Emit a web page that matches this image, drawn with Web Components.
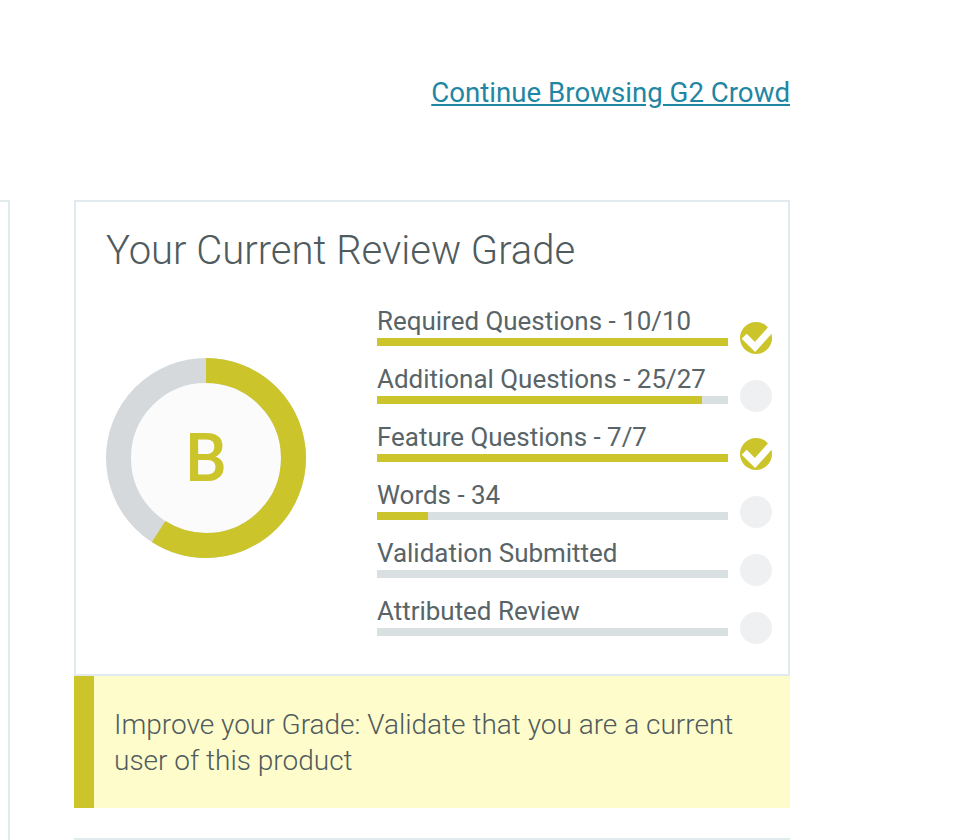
<!DOCTYPE html>
<html>
<head>
<meta charset="utf-8">
<title>Review Grade</title>
<style>
html, body { margin: 0; height: 840px; overflow: hidden; background: #fff; }
body { font-family: Roboto, "Liberation Sans", sans-serif; color: #4f5b5e; }
</style>
</head>
<body>
<review-page>
  <review-card title="Your Current Review Grade">
    <grade-donut slot="donut" grade="B" percent="59"></grade-donut>
    <grade-row value="100" done>Required Questions - 10/10</grade-row>
    <grade-row value="92.6">Additional Questions - 25/27</grade-row>
    <grade-row value="100" done>Feature Questions - 7/7</grade-row>
    <grade-row value="14.5">Words - 34</grade-row>
    <grade-row value="0">Validation Submitted</grade-row>
    <grade-row value="0">Attributed Review</grade-row>
    <improve-note slot="note">Improve your Grade: Validate that you are a current user of this product</improve-note>
  </review-card>
</review-page>

<script>
class ReviewPage extends HTMLElement {
  constructor() {
    super();
    this.attachShadow({ mode: "open" }).innerHTML = `<style>
      :host { display: block; height: 840px; overflow: hidden; }
      header { height: 200px; width: 790px; box-sizing: border-box; padding-top: 74px; text-align: right; font-size: 27.65px; line-height: 38px; }
      a { color: #1f86a3; text-decoration: underline; }
      .cols { display: grid; grid-template-columns: 10px 716px; column-gap: 64px; }
      aside { border-top: 2px solid #e1eaec; border-right: 2px solid #e1eaec; height: 640px; box-sizing: border-box; }
      .next { height: 2px; background: #e1eaec; margin-top: 30px; }
    </style>
    <header><a href="#">Continue Browsing G2 Crowd</a></header>
    <div class="cols">
      <aside></aside>
      <main><slot></slot><div class="next"></div></main>
    </div>`;
  }
}

class ReviewCard extends HTMLElement {
  constructor() {
    super();
    this.attachShadow({ mode: "open" }).innerHTML = `<style>
      :host { display: block; }
      .box { border: 2px solid #e1eaec; height: 476px; box-sizing: border-box; padding: 0 16px 0 30px; }
      h2 { margin: 0; height: 94px; padding-top: 25px; box-sizing: border-box; font-weight: 300; font-size: 40px; line-height: 48px; color: #4f5b5e; }
      .body { display: grid; grid-template-columns: 200px 395px; column-gap: 71px; }
      .left { padding-top: 62px; }
    </style>
    <div class="box">
      <h2></h2>
      <div class="body">
        <div class="left"><slot name="donut"></slot></div>
        <div><slot></slot></div>
      </div>
    </div>
    <slot name="note"></slot>`;
    this.shadowRoot.querySelector("h2").textContent = this.getAttribute("title");
  }
}

class GradeDonut extends HTMLElement {
  constructor() {
    super();
    const r = 87.5;
    const len = 2 * Math.PI * r;
    const on = len * Number(this.getAttribute("percent")) / 100;
    this.attachShadow({ mode: "open" }).innerHTML = `<style>
      :host { display: block; width: 200px; height: 200px; position: relative; }
      svg { display: block; }
      span { position: absolute; inset: 0; display: flex; align-items: center; justify-content: center; font-size: 66px; font-weight: 500; color: #cbc42a; }
    </style>
    <svg width="200" height="200" viewBox="0 0 200 200">
      <circle cx="100" cy="100" r="75" fill="#fbfbfb"/>
      <circle cx="100" cy="100" r="${r}" fill="none" stroke="#d5d9dc" stroke-width="25"/>
      <circle cx="100" cy="100" r="${r}" fill="none" stroke="#cbc42a" stroke-width="25"
        stroke-dasharray="${on} ${len}" transform="rotate(-90 100 100)"/>
    </svg>
    <span>${this.getAttribute("grade")}</span>`;
  }
}

class GradeRow extends HTMLElement {
  constructor() {
    super();
    const done = this.hasAttribute("done");
    const mark = done
      ? `<svg width="32" height="32" viewBox="0 0 32 32"><circle cx="16" cy="16" r="16" fill="#cbc42a"/><path d="M4.2 14.3L15 25 32 6" fill="none" stroke="#fff" stroke-width="7"/></svg>`
      : `<svg width="32" height="32" viewBox="0 0 32 32"><circle cx="16" cy="16" r="16" fill="#eef0f2"/></svg>`;
    this.attachShadow({ mode: "open" }).innerHTML = `<style>
      :host { display: grid; grid-template-columns: 351px 32px; column-gap: 12px; align-items: end; height: 58px; }
      .label { font-size: 25.95px; line-height: 34px; white-space: nowrap; color: #586467; }
      .col { padding-bottom: 8px; }
      .track { height: 8px; background: #d9e0e2; }
      .fill { height: 100%; background: #cbc42a; width: ${this.getAttribute("value")}%; }
      svg { display: block; }
    </style>
    <div class="col">
      <div class="label"><slot></slot></div>
      <div class="track"><div class="fill"></div></div>
    </div>
    ${mark}`;
  }
}

class ImproveNote extends HTMLElement {
  constructor() {
    super();
    this.attachShadow({ mode: "open" }).innerHTML = `<style>
      :host { display: block; }
      div { height: 132px; box-sizing: border-box; display: flex; align-items: center; background: #fefccb; border-left: 20px solid #cbc42a; padding: 2px 50px 0 20px; font-weight: 300; font-size: 28px; line-height: 36px; color: #4f5b5e; }
    </style>
    <div><span><slot></slot></span></div>`;
  }
}

customElements.define("review-page", ReviewPage);
customElements.define("review-card", ReviewCard);
customElements.define("grade-donut", GradeDonut);
customElements.define("grade-row", GradeRow);
customElements.define("improve-note", ImproveNote);
</script>
</body>
</html>
